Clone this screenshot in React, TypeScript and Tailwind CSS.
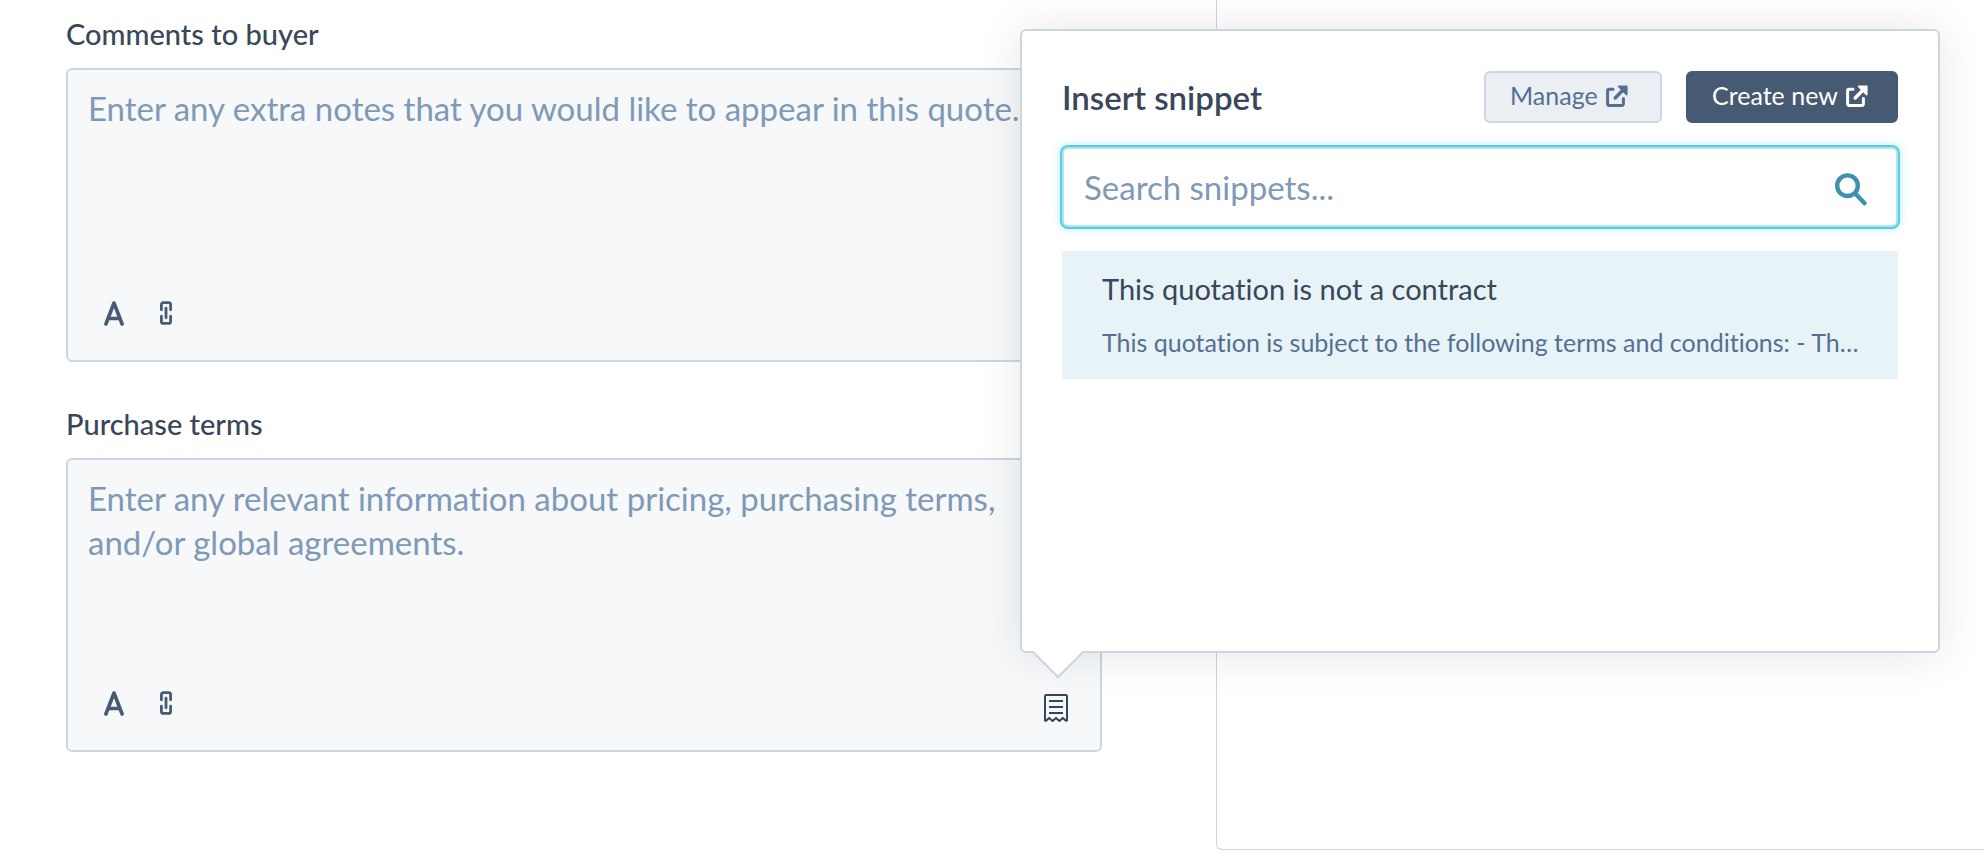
import type { ReactNode } from "react";

function TextStyleIcon() {
  return (
    <svg width="20" height="25" viewBox="0 0 20 25" fill="none" stroke="currentColor" strokeWidth="3.6" strokeLinecap="round" strokeLinejoin="round" aria-hidden="true">
      <path d="M1.9 23 10 2l8.100 21M4.600 17.500h10.800" />
    </svg>
  );
}

function LinkIcon() {
  return (
    <svg width="12" height="24" viewBox="0 0 12 24" fill="none" stroke="currentColor" strokeWidth="2.8" strokeLinecap="round" aria-hidden="true">
      <path d="M1.4 8.8V3.6a2 2 0 0 1 2-2h5.2a2 2 0 0 1 2 2v5.2" />
      <path d="M1.4 15.200v5.200a2 2 0 0 0 2 2h5.200a2 2 0 0 0 2-2v-5.200" />
      <path d="M6 7.200v9.600" />
    </svg>
  );
}

function ReceiptIcon() {
  return (
    <svg width="24" height="28" viewBox="0 0 24 28" fill="none" stroke="currentColor" strokeWidth="2" strokeLinejoin="round" aria-hidden="true">
      <path d="M1 26.6V2.2A1.2 1.2 0 0 1 2.2 1h19.6A1.2 1.2 0 0 1 23 2.2v24.4l-1 .2-3.2-2.9-3.4 3.1-3.4-3.1L8.6 27l-3.4-3.1L2 26.8z" />
      <path d="M5 7h14M5 13h14M5 19h14" />
    </svg>
  );
}

function ExternalIcon() {
  return (
    <svg width="22" height="22" viewBox="0 0 22 22" fill="none" stroke="currentColor" strokeWidth="3" strokeLinecap="round" strokeLinejoin="round" aria-hidden="true">
      <path d="M7 4.200H3.200A1.600 1.600 0 0 0 1.600 5.800v13a1.600 1.600 0 0 0 1.600 1.600h12.600a1.600 1.600 0 0 0 1.600-1.600v-5.400" />
      <path d="M9.200 13 19 3" strokeWidth="3.400" />
      <path d="M12.700 1.300h8v8.300z" fill="currentColor" strokeWidth="1.800" />
    </svg>
  );
}

function SearchIcon() {
  return (
    <svg width="32" height="33" viewBox="0 0 32 33" fill="none" stroke="currentColor" strokeWidth="4.4" strokeLinecap="round" aria-hidden="true">
      <circle cx="12.5" cy="12.7" r="10.3" />
      <path d="M20.5 20.8 29.5 30.2" />
    </svg>
  );
}

function Editor({ id, label, placeholder, action }: { id: string; label: string; placeholder: string; action?: ReactNode }) {
  return (
    <div>
      <label htmlFor={id} className="block text-[29px] leading-9 font-medium text-[#38475a]">
        {label}
      </label>
      <div className="mt-4 rounded-md border-2 border-[#cbd6e2] bg-[#f6f8fa]">
        <textarea
          id={id}
          placeholder={placeholder}
          className="block h-[218px] w-full resize-none bg-transparent px-5 pt-4 text-[33px] leading-[44px] text-[#38475a] outline-none placeholder:text-[#8099b7]"
        />
        <div className="flex items-start justify-between pr-4 pb-[14px] pl-5 text-[#475b75]">
          <div className="flex">
            <button type="button" aria-label="Text style" className="flex h-[50px] w-[52px] items-center justify-center">
              <TextStyleIcon />
            </button>
            <button type="button" aria-label="Insert link" className="flex h-[50px] w-[52px] items-center justify-center">
              <LinkIcon />
            </button>
          </div>
          <div className="relative mt-[2px] h-14">{action}</div>
        </div>
      </div>
    </div>
  );
}

function SnippetPopover() {
  return (
    <section
      aria-label="Insert snippet"
      className="absolute bottom-full -left-2 z-10 mb-[27px] min-h-[624px] w-[920px] rounded-md border-2 border-[#cbd6e2] bg-white p-10 shadow-[0_2px_48px_rgba(0,0,0,0.1)]"
    >
      <div className="flex items-center justify-between">
        <h2 className="text-[33px] leading-[52px] font-semibold text-[#38475a]">Insert snippet</h2>
        <div className="flex gap-6">
          <button type="button" className="flex h-[52px] w-[178px] items-center gap-2 rounded-md border-2 border-[#cbd6e2] bg-[#ebeff3] pb-[2px] pl-6 text-[25px] whitespace-nowrap text-[#546f92]">
            Manage
            <ExternalIcon />
          </button>
          <button type="button" className="flex h-[52px] w-[212px] items-center gap-2 rounded-md border-2 border-[#465a72] bg-[#465a72] pb-[2px] pl-6 text-[25px] whitespace-nowrap text-white">
            Create new
            <ExternalIcon />
          </button>
        </div>
      </div>

      <div className="mt-6 flex h-20 items-center rounded-md border-2 border-[#aee5ee] bg-white pr-[29px] pl-5 text-[#3e91ae] shadow-[0_0_0_2px_#5bcbde,0_0_8px_2px_rgba(0,208,228,0.3)]">
        <input
          type="text"
          aria-label="Search snippets"
          placeholder="Search snippets..."
          className="min-w-0 grow bg-transparent text-[33px] leading-[44px] text-[#38475a] outline-none placeholder:text-[#8099b7]"
        />
        <span className="pt-1">
          <SearchIcon />
        </span>
      </div>

      <button type="button" className="mt-6 block w-full bg-[#e8f3f8] px-10 pt-5 pb-[21px] text-left">
        <span className="block text-[29px] leading-9 text-[#38475a]">This quotation is not a contract</span>
        <span className="mt-[19px] block text-[25px] leading-8 whitespace-nowrap text-[#546f92]">
          This quotation is subject to the following terms and conditions: - Th…
        </span>
      </button>

      <div className="absolute -bottom-5 left-[18px] size-9 rotate-45 border-r-2 border-b-2 border-[#cbd6e2] bg-white" />
    </section>
  );
}

export default function App() {
  return (
    <div className="flex min-h-screen items-stretch overflow-hidden bg-white font-[Lato,sans-serif] [font-variant-ligatures:none]">
      <main className="min-w-0 grow pt-4 pr-[114px] pl-[66px]">
        <Editor id="comments" label="Comments to buyer" placeholder="Enter any extra notes that you would like to appear in this quote." />
        <div className="mt-11">
          <Editor
            id="terms"
            label="Purchase terms"
            placeholder="Enter any relevant information about pricing, purchasing terms, and/or global agreements."
            action={
              <>
                <button type="button" aria-label="Insert snippet" className="flex size-14 items-center justify-center text-[#33475b]">
                  <ReceiptIcon />
                </button>
                <SnippetPopover />
              </>
            }
          />
        </div>
      </main>
      <aside className="mb-[10px] w-[768px] shrink-0 rounded-bl-md border-b border-l border-[#cbd6e2]" />
    </div>
  );
}
